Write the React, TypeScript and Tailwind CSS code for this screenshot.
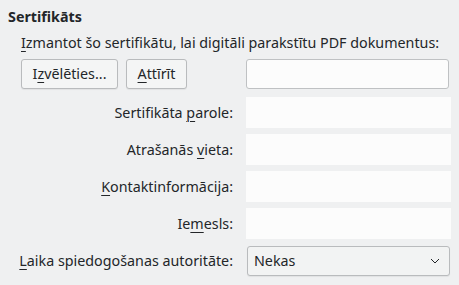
import React from "react";

const U = ({ children }: { children: React.ReactNode }) => (
  <span className="underline decoration-1 underline-offset-[3px]">{children}</span>
);

export default function App() {
  const labels: React.ReactNode[] = [
    <span>Sertifikāta <U>p</U>arole:</span>,
    <span>Atrašanās <U>v</U>ieta:</span>,
    <span><U>K</U>ontaktinformācija:</span>,
    <span>Ie<U>m</U>esls:</span>,
  ];
  return (
    <div
      className="w-[459px] h-[285px] bg-[#eff0f1] text-[#232629] text-[14.3px] leading-[18px] overflow-hidden"
      style={{ fontFamily: '"Noto Sans", sans-serif' }}
    >
      <div className="pt-[8px] pl-[8px] font-bold">Sertifikāts</div>
      <div className="pl-[21px] pr-[8px]">
        <div className="mt-[8px] whitespace-nowrap">
          <U>I</U>zmantot šo sertifikātu, lai digitāli parakstītu PDF dokumentus:
        </div>
        <div className="mt-[7px] flex items-center">
          <button className="h-[30px] w-[97px] rounded-[3px] border border-[#b9bbbd] bg-[#f4f5f5] shadow-[0_1px_1px_rgba(0,0,0,0.06)] text-[#232629] whitespace-nowrap">
            I<U>z</U>vēlēties...
          </button>
          <button className="ml-[8px] h-[30px] w-[61px] rounded-[3px] border border-[#b9bbbd] bg-[#f4f5f5] shadow-[0_1px_1px_rgba(0,0,0,0.06)] text-[#232629]">
            <U>A</U>ttīrīt
          </button>
          <div className="ml-[59px] h-[30px] w-[203px] rounded-[3px] border border-[#bfc1c3] bg-[#fcfcfc]" />
        </div>
        <div className="mt-[8px] grid grid-cols-[212px_205px] gap-x-[13px] gap-y-[6px]">
          {labels.map((l, i) => (
            <React.Fragment key={i}>
              <div className="h-[31px] flex items-center justify-end whitespace-nowrap">{l}</div>
              <div className="h-[31px] bg-[#fcfcfc]" />
            </React.Fragment>
          ))}
          <div className="h-[31px] flex items-center justify-end whitespace-nowrap">
            <span>
              <U>L</U>aika spiedogošanas autoritāte:
            </span>
          </div>
          <div className="h-[31px] pt-[1px]">
            <div className="ml-[1px] h-[30px] w-[203px] rounded-[3px] border border-[#b9bbbd] bg-[#f2f3f3] shadow-[0_1px_1px_rgba(0,0,0,0.06)] flex items-center pl-[6px] pr-[9px]">
              <span className="flex-1">Nekas</span>
              <svg width="10" height="6" viewBox="0 0 10 6">
                <path d="M1 1 L5 5 L9 1" fill="none" stroke="#232629" strokeWidth="1" />
              </svg>
            </div>
          </div>
        </div>
      </div>
    </div>
  );
}
